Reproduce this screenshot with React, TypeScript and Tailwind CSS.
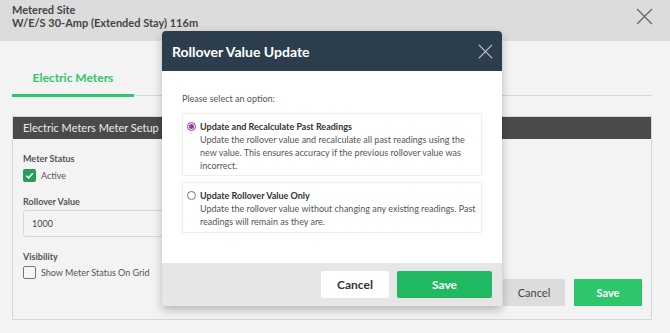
import React from "react";

const XIcon = ({ size, color, sw }: { size: number; color: string; sw: number }) => (
  <svg width={size} height={size} viewBox="0 0 16 16" fill="none">
    <path d="M1 1L15 15M15 1L1 15" stroke={color} strokeWidth={sw} />
  </svg>
);

export default function App() {
  const font = { fontFamily: "Lato, 'Open Sans', sans-serif" };
  return (
    <div className="relative w-[670px] h-[333px] overflow-hidden bg-[#f3f3f3]" style={font}>
      {/* top header */}
      <div className="h-[41px] bg-[#dcdcdc] pl-3 pr-[17px] pt-[3px] flex justify-between">
        <div className="text-[11px] leading-[13px] font-bold text-[#454545]">
          <div>Metered Site</div>
          <div>W/E/S 30-Amp (Extended Stay) 116m</div>
        </div>
        <div className="pt-[5px]">
          <XIcon size={17} color="#6b6b6b" sw={1.3} />
        </div>
      </div>

      {/* tabs */}
      <div className="ml-3 mr-[18px] mt-[20px] flex border-b border-[#d6d6d6]">
        <div className="w-[122px] text-center pt-[9px] pb-[8px] border-b-[3px] border-[#2ec66b] -mb-[2px] text-[12px] leading-[16px] font-bold text-[#2ec66b]">
          Electric Meters
        </div>
      </div>

      {/* panel */}
      <div className="ml-3 mr-[18px] mt-[20px] h-[204px] border border-[#d6d6d6] flex flex-col">
        <div className="h-[22px] bg-[#4a4a4a] pl-[10px] text-[11px] leading-[22px] text-[#ececec]">
          Electric Meters Meter Setup
        </div>
        <div className="flex-1 flex flex-col px-[10px] pt-[14px] relative">
          <div className="text-[9px] leading-[12px] font-bold text-[#555]">Meter Status</div>
          <div className="mt-[4px] flex items-center gap-[5px]">
            <div className="w-[13px] h-[13px] rounded-[2px] bg-[#2a9d5c] flex items-center justify-center">
              <svg width="9" height="9" viewBox="0 0 10 10" fill="none">
                <path d="M1.5 5.2L4 7.6L8.6 2.4" stroke="white" strokeWidth="1.6" />
              </svg>
            </div>
            <span className="text-[9px] text-[#555]">Active</span>
          </div>
          <div className="mt-[13px] text-[9px] leading-[12px] font-bold text-[#555]">Rollover Value</div>
          <div className="mt-[2px] w-[300px] h-[27px] border border-[#d8d8d8] rounded-[3px] bg-[#f4f4f4] pl-[8px] text-[9px] leading-[25px] text-[#444]">
            1000
          </div>
          <div className="mt-[14px] text-[9px] leading-[12px] font-bold text-[#555]">Visibility</div>
          <div className="mt-[3px] flex items-center gap-[5px]">
            <div className="w-[13px] h-[13px] rounded-[2px] border border-[#777] bg-[#f6f6f6]" />
            <span className="text-[9px] text-[#555]">Show Meter Status On Grid</span>
          </div>
          <div className="absolute right-[9px] bottom-[13px] flex gap-[9px]">
            <div className="w-[62px] h-[27px] bg-[#dcdcdc] text-[11px] leading-[27px] text-center text-[#444]">Cancel</div>
            <div className="w-[68px] h-[27px] bg-[#2ec66b] text-[11px] leading-[27px] text-center font-bold text-white">Save</div>
          </div>
        </div>
      </div>

      {/* modal */}
      <div className="absolute left-[162px] top-[31px] w-[340px] h-[275px] rounded-[4px] bg-white shadow-[0_4px_10px_rgba(0,0,0,0.25)] flex flex-col overflow-hidden">
        <div className="h-[40px] bg-[#2c3e4d] flex items-center justify-between pl-[10px] pr-[9px]">
          <span className="text-[14px] font-bold text-white">Rollover Value Update</span>
          <XIcon size={15} color="#c5cbd0" sw={1.2} />
        </div>
        <div className="flex-1 px-[20px] pt-[22px]">
          <div className="text-[9px] leading-[12px] text-[#555]">Please select an option:</div>
          <div className="mt-[8px] border border-[#eeeeee] pl-[4px] pr-[2px] pt-[6px] pb-[3px]">
            <div className="flex items-center gap-[4px]">
              <div className="w-[9px] h-[9px] rounded-full border border-[#a0369f] flex items-center justify-center">
                <div className="w-[5px] h-[5px] rounded-full bg-[#a0369f]" />
              </div>
              <span className="text-[9px] leading-[13px] font-bold text-[#333]">Update and Recalculate Past Readings</span>
            </div>
            <div className="pl-[13px] text-[9px] leading-[13px] text-[#555]">
              Update the rollover value and recalculate all past readings using the new value. This ensures accuracy if the previous rollover value was incorrect.
            </div>
          </div>
          <div className="mt-[6px] border border-[#eeeeee] pl-[4px] pr-[2px] pt-[6px] pb-[4px]">
            <div className="flex items-center gap-[4px]">
              <div className="w-[9px] h-[9px] rounded-full border border-[#777]" />
              <span className="text-[9px] leading-[13px] font-bold text-[#333]">Update Rollover Value Only</span>
            </div>
            <div className="pl-[13px] text-[9px] leading-[13px] text-[#555]">
              Update the rollover value without changing any existing readings. Past readings will remain as they are.
            </div>
          </div>
        </div>
        <div className="h-[43px] bg-[#e6e6e6] flex items-center justify-end gap-[8px] pr-[10px]">
          <div className="w-[68px] h-[27px] bg-white rounded-[2px] text-[12px] leading-[27px] text-center font-bold text-[#333]">Cancel</div>
          <div className="w-[95px] h-[27px] bg-[#21b862] rounded-[2px] text-[12px] leading-[27px] text-center font-bold text-white">Save</div>
        </div>
      </div>
    </div>
  );
}
